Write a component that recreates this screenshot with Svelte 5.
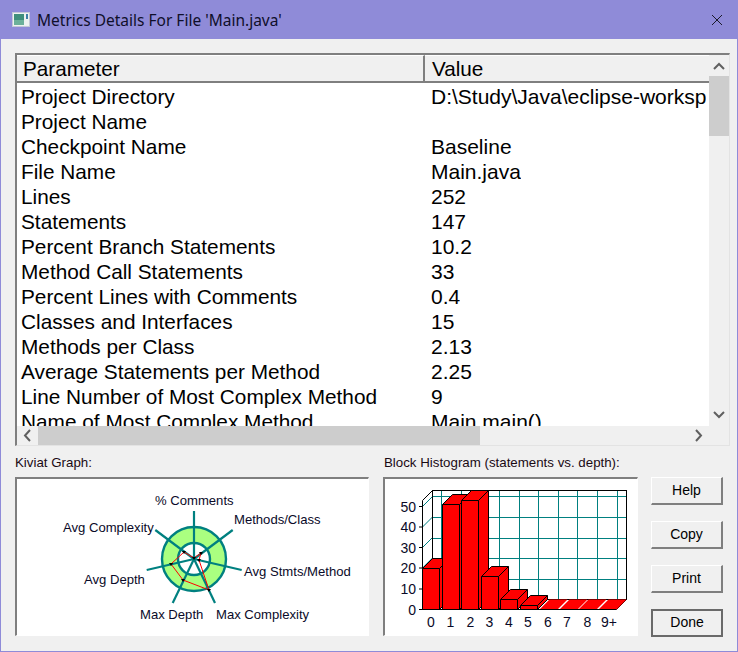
<script>
  const rows = [
    ['Project Directory', 'D:\\Study\\Java\\eclipse-worksp'],
    ['Project Name', ''],
    ['Checkpoint Name', 'Baseline'],
    ['File Name', 'Main.java'],
    ['Lines', '252'],
    ['Statements', '147'],
    ['Percent Branch Statements', '10.2'],
    ['Method Call Statements', '33'],
    ['Percent Lines with Comments', '0.4'],
    ['Classes and Interfaces', '15'],
    ['Methods per Class', '2.13'],
    ['Average Statements per Method', '2.25'],
    ['Line Number of Most Complex Method', '9'],
    ['Name of Most Complex Method', 'Main.main()']
  ];
  const buttons = ['Help', 'Copy', 'Print', 'Done'];

  const spokes = [[194, 511], [232.7, 530], [241.7, 570], [215, 603], [172.7, 603], [146.7, 570], [155.3, 530]];
  const red = [[194, 558], [201, 553], [199, 560], [209, 590], [183, 580], [171, 564], [184, 552]];
  const kLabels = [
    ['% Comments', 155, 505], ['Methods/Class', 234, 524], ['Avg Stmts/Method', 244, 576],
    ['Max Complexity', 216, 619], ['Max Depth', 140, 619], ['Avg Depth', 84, 584], ['Avg Complexity', 63, 532]
  ];

  const K = 15, KY = 477;
  const H = 383, HY = 477;
  const vLines = [441.5, 461.5, 480.5, 499.5, 519.5, 538.5, 558.5, 577.5, 597.5, 617.5];
  const hLines = [579.5, 558.5, 538.5, 517.5, 496.5];
  const ticks = [0, 10, 20, 30, 40, 50];
  const tickY = [609.5, 589, 568, 547.5, 527, 506.5];
  const bars = [568.5, 504.5, 500.5, 576.5, 599.5, 605.5, 609.5, 609.5, 609.5, 609.5];
  const barX = [422.5, 442.5, 461.5, 481.5, 500.5, 520.5, 539.5, 559.5, 578.5, 598.5];
  const xLabels = ['0', '1', '2', '3', '4', '5', '6', '7', '8', '9+'];
  const xPos = [431, 450.5, 470.3, 489.5, 509, 528, 548, 567, 587.5, 609];
</script>

<div class="window">
  <header class="titlebar">
    <svg class="app-icon" width="18" height="18" viewBox="0 0 18 18">
      <rect x="0.5" y="1.5" width="17" height="14" fill="#eef2f0" stroke="#c3c8d8" />
      <rect x="2" y="3" width="10" height="11" fill="#3f8f7c" />
      <rect x="2" y="9" width="10" height="5" fill="#6cb09a" />
      <rect x="14" y="3" width="2" height="5" fill="#3f7fa8" />
    </svg>
    <span class="title">Metrics Details For File 'Main.java'</span>
    <svg class="close" width="12" height="12" viewBox="0 0 12 12">
      <path d="M1 1 L11 11 M11 1 L1 11" stroke="#1a1a2a" stroke-width="1" fill="none" />
    </svg>
  </header>

  <main class="content">
    <section class="frame table">
      <div class="list">
        <div class="head">
          <div class="hcell first">Parameter</div>
          <div class="hcell">Value</div>
        </div>
        <div class="body">
          {#each rows as r}
            <div class="row"><span class="name">{r[0]}</span><span class="val">{r[1]}</span></div>
          {/each}
        </div>
      </div>
      <div class="vbar">
        <svg width="20" height="21" viewBox="0 0 20 21"><path d="M5 14 L10 9 L15 14" class="chev" /></svg>
        <div class="vthumb"></div>
        <div class="grow"></div>
        <svg width="20" height="21" viewBox="0 0 20 21"><path d="M5 7 L10 12 L15 7" class="chev" /></svg>
      </div>
      <div class="hbar">
        <svg width="21" height="19" viewBox="0 0 21 19"><path d="M13 4 L8 9.5 L13 15" class="chev" /></svg>
        <div class="hthumb"></div>
        <div class="grow"></div>
        <svg width="21" height="19" viewBox="0 0 21 19"><path d="M8 4 L13 9.5 L8 15" class="chev" /></svg>
      </div>
      <div class="corner"></div>
    </section>

    <section class="lower">
      <div class="panel kiviat">
        <div class="label">Kiviat Graph:</div>
        <div class="frame chart">
          <svg width="352" height="157" viewBox="{K + 2} {KY + 2} 352 157">
            <circle cx="194" cy="559" r="24" fill="none" stroke="#aaff80" stroke-width="16" />
            <circle cx="194" cy="559" r="32" fill="none" stroke="#008080" stroke-width="2.4" />
            <circle cx="194" cy="559" r="16" fill="none" stroke="#008080" stroke-width="2.4" />
            {#each spokes as s}
              <line x1="194" y1="559" x2={s[0]} y2={s[1]} stroke="#008080" stroke-width="2.2" />
            {/each}
            <polygon points={red.map((p) => p.join(',')).join(' ')} fill="none" stroke="#ff0000" stroke-width="1" />
            {#each red as p}
              <path d="M{p[0] - 2} {p[1] - 1} h4 l-2 3 z" fill="#000" />
            {/each}
            {#each kLabels as l}
              <text x={l[1]} y={l[2]} class="ctext">{l[0]}</text>
            {/each}
          </svg>
        </div>
      </div>

      <div class="panel hist">
        <div class="label">Block Histogram (statements vs. depth):</div>
        <div class="frame chart">
          <svg width="253" height="157" viewBox="{H + 2} {HY + 2} 253 157">
            {#each vLines as x}
              <line x1={x} y1="490.5" x2={x} y2="599.5" class="grid" />
            {/each}
            {#each hLines as y}
              <line x1="432.5" y1={y} x2="626.5" y2={y} class="grid" />
            {/each}
            {#each ticks as t, i}
              {#if i > 0}
                <line x1="422.5" y1={tickY[i]} x2="432.5" y2={tickY[i] - 10} stroke="#008080" />
              {/if}
              <line x1="419" y1={tickY[i]} x2="422.5" y2={tickY[i]} stroke="#000" />
              <text x="416" y={tickY[i] + 5} class="ctext axis end">{t}</text>
            {/each}
            <rect x="432.5" y="490.5" width="194" height="109" fill="none" stroke="#000" />
            <path d="M422.5 609.5 V500.5 L432.5 490.5 M626.5 599.5 L616.5 609.5 M432.5 599.5 L422.5 609.5" fill="none" stroke="#000" />
            {#each bars as top, i}
              {@const x = barX[i]}
              {#if top < 609}
                <path d="M{x} {top} l10 -10 h17 v{609.5 - top} l-10 10 h-17 z" fill="#ff0000" stroke="#000" />
                <path d="M{x} {top} h17 l10 -10 M{x + 17} {top} V609.5" fill="none" stroke="#000" />
              {:else}
                <path d="M{x} 609.5 l10 -10 h18 l-10 10 z" fill="#ff0000" />
              {/if}
            {/each}
            <line x1="422.5" y1="609.5" x2="616.5" y2="609.5" stroke="#000" />
            {#each xLabels as l, i}
              <text x={xPos[i]} y="627" class="ctext axis mid">{l}</text>
            {/each}
          </svg>
        </div>
      </div>

      <div class="buttons">
        {#each buttons as b}
          <button class:default={b === 'Done'}>{b}</button>
        {/each}
      </div>
    </section>
  </main>
</div>

<style>
  :global(body) {
    margin: 0;
    background: #f0f0f0;
  }
  .window {
    width: 738px;
    height: 652px;
    box-sizing: border-box;
    border: 1px solid #8f8bd8;
    border-top: 0;
    background: #f0f0f0;
    display: flex;
    flex-direction: column;
    font-family: "Liberation Sans", Arial, sans-serif;
    color: #000;
    overflow: hidden;
  }
  .titlebar {
    height: 39px;
    flex: none;
    background: #8f8bd8;
    display: flex;
    align-items: center;
    padding: 0 14px 0 11px;
    gap: 7px;
  }
  .title {
    font-family: "Noto Sans", sans-serif;
    font-size: 15.5px;
    color: #0f0f2a;
    flex: 1;
  }
  .content {
    flex: 1;
    padding: 14px 6px 0 14px;
    display: flex;
    flex-direction: column;
  }
  .frame {
    box-sizing: border-box;
    border-style: solid;
    border-width: 2px 1px 1px 2px;
    border-color: #7f7f7f #ffffff #ffffff #7f7f7f;
  }
  .table {
    width: 715px;
    height: 393px;
    flex: none;
    display: grid;
    grid-template-columns: 692px 1fr;
    grid-template-rows: 1fr 19px;
    border-right-color: #e3e3e3;
    border-bottom-color: #e3e3e3;
    background: #f0f0f0;
  }
  .list {
    background: #fff;
    overflow: hidden;
    min-height: 0;
  }
  .head {
    display: flex;
    height: 28px;
    box-sizing: border-box;
    background: #f0f0f0;
    border-bottom: 2px solid #7f7f7f;
  }
  .hcell {
    font-size: 20.7px;
    line-height: 26px;
    padding-left: 7px;
    flex: 1;
    border-top: 1px solid #fff;
    height: 26px;
    box-sizing: border-box;
    white-space: nowrap;
  }
  .hcell.first {
    flex: none;
    width: 408px;
    padding-left: 6px;
    border-right: 2px solid #7f7f7f;
  }
  .body {
    padding-top: 1px;
  }
  .row {
    display: flex;
    height: 25px;
    line-height: 25px;
    font-size: 20.8px;
    white-space: nowrap;
  }
  .name {
    width: 414px;
    flex: none;
    padding-left: 4px;
    box-sizing: border-box;
  }
  .val {
    font-size: 21px;
    overflow: hidden;
  }
  .vbar {
    display: flex;
    flex-direction: column;
    width: 20px;
  }
  .hbar {
    display: flex;
    align-items: stretch;
  }
  .vthumb {
    height: 60px;
    background: #cdcdcd;
    flex: none;
  }
  .hthumb {
    width: 442px;
    background: #cdcdcd;
    flex: none;
  }
  .grow {
    flex: 1;
  }
  .vbar svg, .hbar svg {
    flex: none;
    display: block;
  }
  .chev {
    fill: none;
    stroke: #606060;
    stroke-width: 2;
  }
  .lower {
    display: flex;
    margin-top: 8px;
  }
  .panel {
    display: flex;
    flex-direction: column;
  }
  .kiviat {
    width: 354px;
    margin-right: 14px;
  }
  .hist {
    width: 255px;
    margin-right: 13px;
  }
  .label {
    height: 23px;
    font-size: 13.3px;
    line-height: 18px;
    white-space: nowrap;
    color: #1a0a14;
  }
  .hist .label {
    padding-left: 1px;
  }
  .chart {
    height: 159px;
    background: #fff;
    overflow: hidden;
  }
  .chart svg {
    display: block;
  }
  .ctext {
    font-family: "Liberation Sans", Arial, sans-serif;
    font-size: 13.1px;
    fill: #0a0a28;
  }
  .axis {
    font-size: 14px;
  }
  .end {
    text-anchor: end;
  }
  .mid {
    text-anchor: middle;
  }
  .grid {
    stroke: #008080;
    stroke-width: 1;
  }
  .buttons {
    display: flex;
    flex-direction: column;
    gap: 16px;
    padding-top: 23px;
  }
  button {
    width: 72px;
    height: 28px;
    padding: 0 0 2px;
    box-sizing: border-box;
    background: #f0f0f0;
    border-style: solid;
    border-width: 1px 2px 2px 1px;
    border-color: #ffffff #7f7f7f #7f7f7f #ffffff;
    font-family: "Liberation Sans", Arial, sans-serif;
    font-size: 14px;
    color: #000;
  }
  button.default {
    border: 2px solid #6a6a6a;
  }
</style>
